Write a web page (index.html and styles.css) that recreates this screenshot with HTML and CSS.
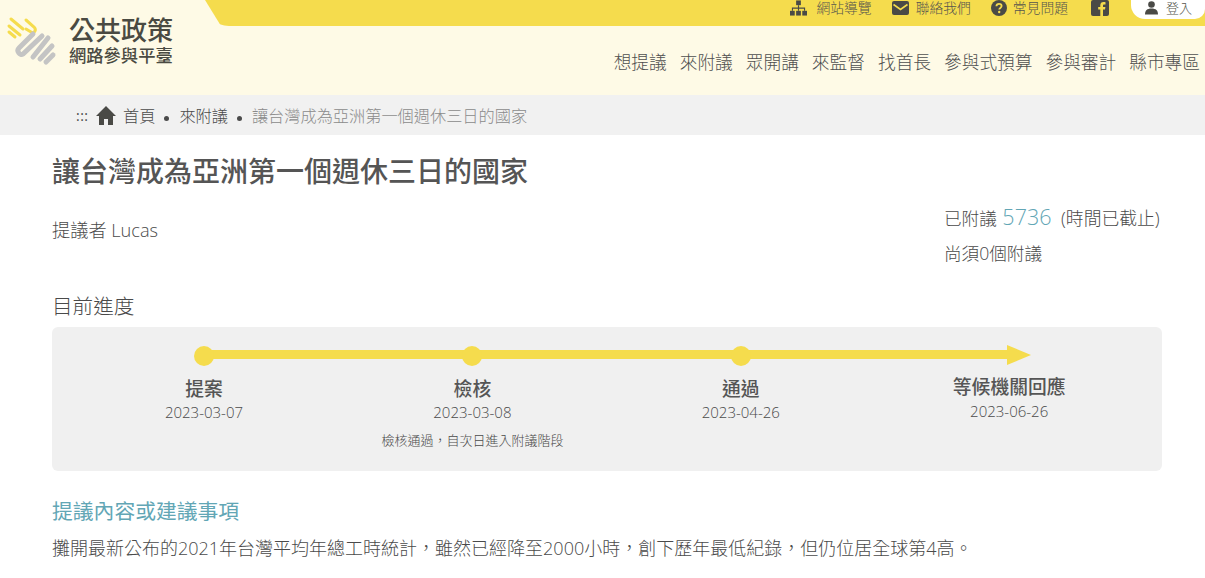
FILE: index.html
```html
<!DOCTYPE html>
<html lang="zh-Hant">
<head>
<meta charset="utf-8">
<title>讓台灣成為亞洲第一個週休三日的國家</title>
<link rel="stylesheet" href="styles.css">
</head>
<body>
<header class="site-header">
  <a class="brand" href="#">
    <svg class="logo" width="56" height="56" viewBox="6 13 56 56" fill="none" stroke-linecap="round">
      <g stroke="#f5dc4d" stroke-width="3">
        <path d="M11 19l12 10"/>
        <path d="M9 26l11 9"/>
        <path d="M9 32l6 5"/>
        <path d="M26 20l8 7c3 3 0 7-3 5l-5-3"/>
      </g>
      <g stroke="#c4c4c4" stroke-width="5">
        <path d="M33 34L19 48c-3 3 1 8 4 6L42 36"/>
        <path d="M33 57l15-19"/>
        <path d="M40 59l12-13"/>
        <path d="M46 62l7-7"/>
      </g>
    </svg>
    <span class="brand-text">
      <span class="brand-main">公共政策</span>
      <span class="brand-sub">網路參與平臺</span>
    </span>
  </a>
  <div class="header-right">
    <div class="topbar">
      <a class="top-link gap-wide" href="#">
        <svg width="17" height="16" viewBox="0 0 18 16" fill="#4a4a46"><rect x="6.5" y="0" width="5" height="5"/><rect x="0" y="11" width="5" height="5"/><rect x="6.5" y="11" width="5" height="5"/><rect x="13" y="11" width="5" height="5"/><path d="M8.4 5h1.2v2.6H16V11h-1.2V8.8H9.6V11H8.4V8.8H3.2V11H2V7.6h6.4z"/></svg>
        網站導覽
      </a>
      <a class="top-link" href="#">
        <svg width="17" height="14" viewBox="0 0 17 14"><rect width="17" height="14" rx="2" fill="#4a4a46"/><path d="M1.5 3.5l7 5 7-5" fill="none" stroke="#f5dc4d" stroke-width="1.6"/></svg>
        聯絡我們
      </a>
      <a class="top-link gap-tight" href="#">
        <svg width="16" height="16" viewBox="0 0 16 16"><circle cx="8" cy="8" r="8" fill="#4a4a46"/><path d="M5.4 6.2C5.5 4.6 6.6 3.8 8 3.8c1.5 0 2.6.9 2.6 2.2 0 1.9-2.4 1.9-2.4 3.6" fill="none" stroke="#f5dc4d" stroke-width="1.8"/><circle cx="8.2" cy="12" r="1.2" fill="#f5dc4d"/></svg>
        常見問題
      </a>
      <a class="fb" href="#" aria-label="Facebook">
        <svg width="18" height="16" viewBox="0 0 18 16"><rect width="18" height="16" rx="2" fill="#4a4a46"/><path d="M12 16V9.6h2l.4-2.5H12V5.6c0-.8.3-1.2 1.2-1.2h1.3V2.2c-.5-.1-1.2-.2-2-.2-2 0-3.2 1.2-3.2 3.3v1.8H7.2v2.5h2.1V16z" fill="#f5dc4d"/></svg>
      </a>
      <a class="login" href="#">
        <svg width="13" height="14" viewBox="0 0 13 14" fill="#4a4a46"><circle cx="6.5" cy="3.5" r="3.3"/><path d="M0 13.5c0-4 2-6 6.5-6s6.5 2 6.5 6z"/></svg>
        登入
      </a>
    </div>
    <nav class="main-nav">
      <a href="#">想提議</a>
      <a href="#">來附議</a>
      <a href="#">眾開講</a>
      <a href="#">來監督</a>
      <a href="#">找首長</a>
      <a href="#">參與式預算</a>
      <a href="#">參與審計</a>
      <a href="#">縣市專區</a>
    </nav>
  </div>
</header>

<div class="breadcrumb">
  <span class="crumb-mark">:::</span>
  <svg class="home" width="20" height="19" viewBox="0 0 20 19" fill="#4a4a46"><path d="M10 0L0 10h3v9h5v-6h4v6h5v-9h3z"/></svg>
  <a href="#">首頁</a>
  <span class="dot"></span>
  <a href="#">來附議</a>
  <span class="dot"></span>
  <span class="current">讓台灣成為亞洲第一個週休三日的國家</span>
</div>

<main class="content">
  <h1>讓台灣成為亞洲第一個週休三日的國家</h1>
  <div class="meta">
    <div class="proposer">提議者 Lucas</div>
    <div class="stats">
      <div class="stat-line">已附議 <span class="count">5736</span> <span class="closed">(時間已截止)</span></div>
      <div class="need">尚須0個附議</div>
    </div>
  </div>
  <h2 class="progress-title">目前進度</h2>
  <section class="progress">
    <div class="track">
      <span class="track-line"></span>
      <span class="track-head"></span>
    </div>
    <div class="steps">
      <div class="step">
        <span class="node"></span>
        <div class="step-name">提案</div>
        <div class="step-date">2023-03-07</div>
      </div>
      <div class="step">
        <span class="node"></span>
        <div class="step-name">檢核</div>
        <div class="step-date">2023-03-08</div>
        <div class="step-note">檢核通過，自次日進入附議階段</div>
      </div>
      <div class="step">
        <span class="node"></span>
        <div class="step-name">通過</div>
        <div class="step-date">2023-04-26</div>
      </div>
      <div class="step last">
        <span class="node none"></span>
        <div class="step-name">等候機關回應</div>
        <div class="step-date">2023-06-26</div>
      </div>
    </div>
  </section>
  <h2 class="section-title">提議內容或建議事項</h2>
  <p class="body-text">攤開最新公布的2021年台灣平均年總工時統計，雖然已經降至2000小時，創下歷年最低紀錄，但仍位居全球第4高。</p>
</main>
</body>
</html>
```
FILE: styles.css
```css
* { box-sizing: border-box; }
html, body { margin: 0; padding: 0; }
body {
  background: #fff;
  color: #4a4a4a;
  font-family: "Open Sans", "Noto Sans CJK TC", sans-serif;
  font-weight: 300;
  height: 578px;
  overflow: hidden;
}
a { color: inherit; text-decoration: none; }

.site-header {
  display: flex;
  height: 95px;
  background: #fefae6;
  justify-content: space-between;
}
.brand {
  display: flex;
  align-items: flex-start;
  padding: 13px 0 0 6px;
  gap: 8px;
  width: 205px;
  flex: none;
}
.logo { flex: none; }
.brand-text { display: flex; flex-direction: column; margin-top: 2px; margin-left: -1px; white-space: nowrap; }
.brand-main { font-size: 26px; line-height: 30px; font-weight: 500; color: #4a4a42; }
.brand-sub { font-size: 17.3px; line-height: 22px; font-weight: 500; color: #4a4a42; }

.header-right { width: 1000px; display: flex; flex-direction: column; }
.topbar {
  height: 26px;
  background: #f5dc4d;
  border-bottom-left-radius: 24px;
  display: flex;
  justify-content: flex-end;
  align-items: flex-start;
  font-size: 13.8px;
  line-height: 16px;
  clip-path: polygon(0 0, 100% 0, 100% 100%, 16px 100%);
}
.top-link { display: flex; align-items: center; gap: 7px; margin-right: 20px; height: 16px; color: #55554d; }
.top-link.gap-wide { gap: 9px; }
.top-link.gap-tight { gap: 6px; }
.top-link svg { flex: none; }
.fb { display: block; height: 16px; margin-left: 3px; margin-right: 22px; }
.login {
  display: flex;
  align-items: center;
  gap: 8px;
  width: 74px;
  height: 19px;
  padding: 0 0 3px 14px;
  background: #fff;
  border-bottom-left-radius: 14px;
  border-bottom-right-radius: 10px;
  color: #55554d;
  font-size: 13px;
}
.main-nav {
  display: flex;
  justify-content: flex-end;
  gap: 13px;
  padding: 24px 5px 0 0;
  font-size: 17.7px;
  line-height: 25px;
  color: #4f4f4f;
  font-weight: 300;
}

.breadcrumb {
  height: 40px;
  background: #f1f1f1;
  display: flex;
  align-items: center;
  padding-left: 76px;
  font-size: 16.2px;
  color: #4a4a4a;
  font-weight: 300;
}
.crumb-mark { font-size: 14px; font-weight: 400; width: 20px; letter-spacing: 0.5px; }
.home { margin-right: 7px; }
.dot { width: 5px; height: 5px; border-radius: 50%; background: #4a4a4a; margin: 6px 10px 0 9px; }
.current { color: #8b8b8b; }

.content { padding: 0 43px 0 52px; }
h1 {
  margin: 18px 0 0;
  font-size: 28px;
  line-height: 36px;
  font-weight: 500;
  color: #555;
}
.meta { display: flex; justify-content: space-between; margin-top: 15px; }
.proposer { font-size: 18.2px; line-height: 26px; margin-top: 13px; }
.stats { font-size: 17.6px; line-height: 26px; width: 218px; }
.stat-line { white-space: nowrap; }
.count { font-size: 21.5px; color: #62a6b5; margin: 0 5px 0 1px; }
.closed { font-size: 17.8px; }
.need { margin-top: 9px; }
.progress-title { margin: 26px 0 0; font-size: 20.6px; line-height: 28px; font-weight: 300; }
.progress {
  position: relative;
  height: 144px;
  margin-top: 7px;
  background: #f0f0f0;
  border-radius: 6px;
}
.track { position: absolute; left: 152px; top: 18px; width: 827px; height: 20px; }
.track-line { position: absolute; left: 0; right: 22px; top: 5px; height: 9px; background: #f5dc4d; }
.track-head {
  position: absolute;
  right: 0;
  top: 0;
  width: 0;
  height: 0;
  border-left: 24px solid #f5dc4d;
  border-top: 10px solid transparent;
  border-bottom: 10px solid transparent;
}
.steps { position: relative; display: grid; grid-template-columns: repeat(4, 268.4px); padding: 19px 0 0 18px; }
.step { display: flex; flex-direction: column; align-items: center; width: 268px; }
.node { width: 20px; height: 20px; border-radius: 50%; background: #f5dc4d; }
.node.none { background: transparent; height: 18px; }
.step-name { font-size: 18.8px; line-height: 24px; font-weight: 500; margin-top: 11px; white-space: nowrap; color: #555; }
.step-date { font-size: 15px; line-height: 20px; margin-top: 1px; }
.last .step-date { margin-top: 2px; }
.step-note { font-size: 13px; line-height: 18px; margin-top: 9px; white-space: nowrap; }
.section-title { margin: 26px 0 0; font-size: 20.8px; line-height: 28px; font-weight: 400; color: #62a6b5; }
.body-text { margin: 10px 0 0; font-size: 18px; line-height: 26px; font-weight: 300; white-space: nowrap; }
```
